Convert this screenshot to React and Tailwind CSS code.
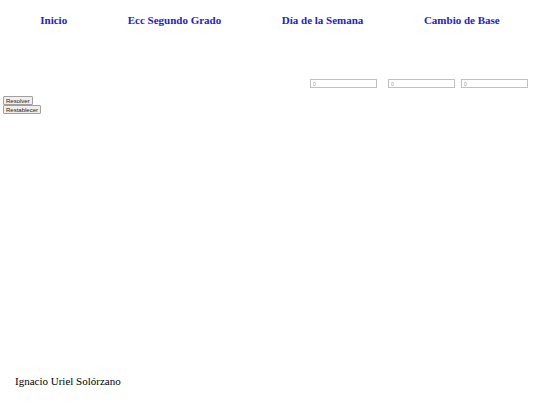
export default function App() {
  const serif = { fontFamily: '"Liberation Serif", "Times New Roman", serif' };
  const inputCls = "w-[67px] h-[9px] border border-[#c0c0c0] text-[5px] leading-[5px] px-[2px] placeholder:text-[#9a9a9a] font-['Liberation_Sans',sans-serif]";
  return (
    <div className="w-[540px] h-[405px] bg-white flex flex-col" style={serif}>
      <nav className="flex justify-around px-[10px] pt-[14px]">
        {["Inicio", "Ecc Segundo Grado", "Día de la Semana", "Cambio de Base"].map((t) => (
          <a key={t} className="text-[11px] leading-[13px] font-bold text-[#2222cc]">{t}</a>
        ))}
      </nav>
      <div className="flex justify-end pr-[12px] mt-[52px]">
        <input placeholder="0" className={`${inputCls} mr-[11px]`} />
        <input placeholder="0" className={`${inputCls} mr-[6px]`} />
        <input placeholder="0" className={inputCls} />
      </div>
      <div className="flex flex-col items-start pl-[3px] mt-[8px]">
        <button className="h-[9px] px-[2px] bg-[#efefef] border border-[#a0a0a0] rounded-[1px] text-[6px] leading-[6px] text-[#222] font-['Liberation_Sans',sans-serif]">Resolver</button>
        <button className="h-[9px] px-[2px] bg-[#efefef] border border-[#a0a0a0] rounded-[1px] text-[6px] leading-[6px] text-[#222] font-['Liberation_Sans',sans-serif]">Restablecer</button>
      </div>
      <footer className="mt-auto pl-[15px] pb-[17px] text-[11px] leading-[13px] text-black">Ignacio Uriel Solórzano</footer>
    </div>
  );
}
